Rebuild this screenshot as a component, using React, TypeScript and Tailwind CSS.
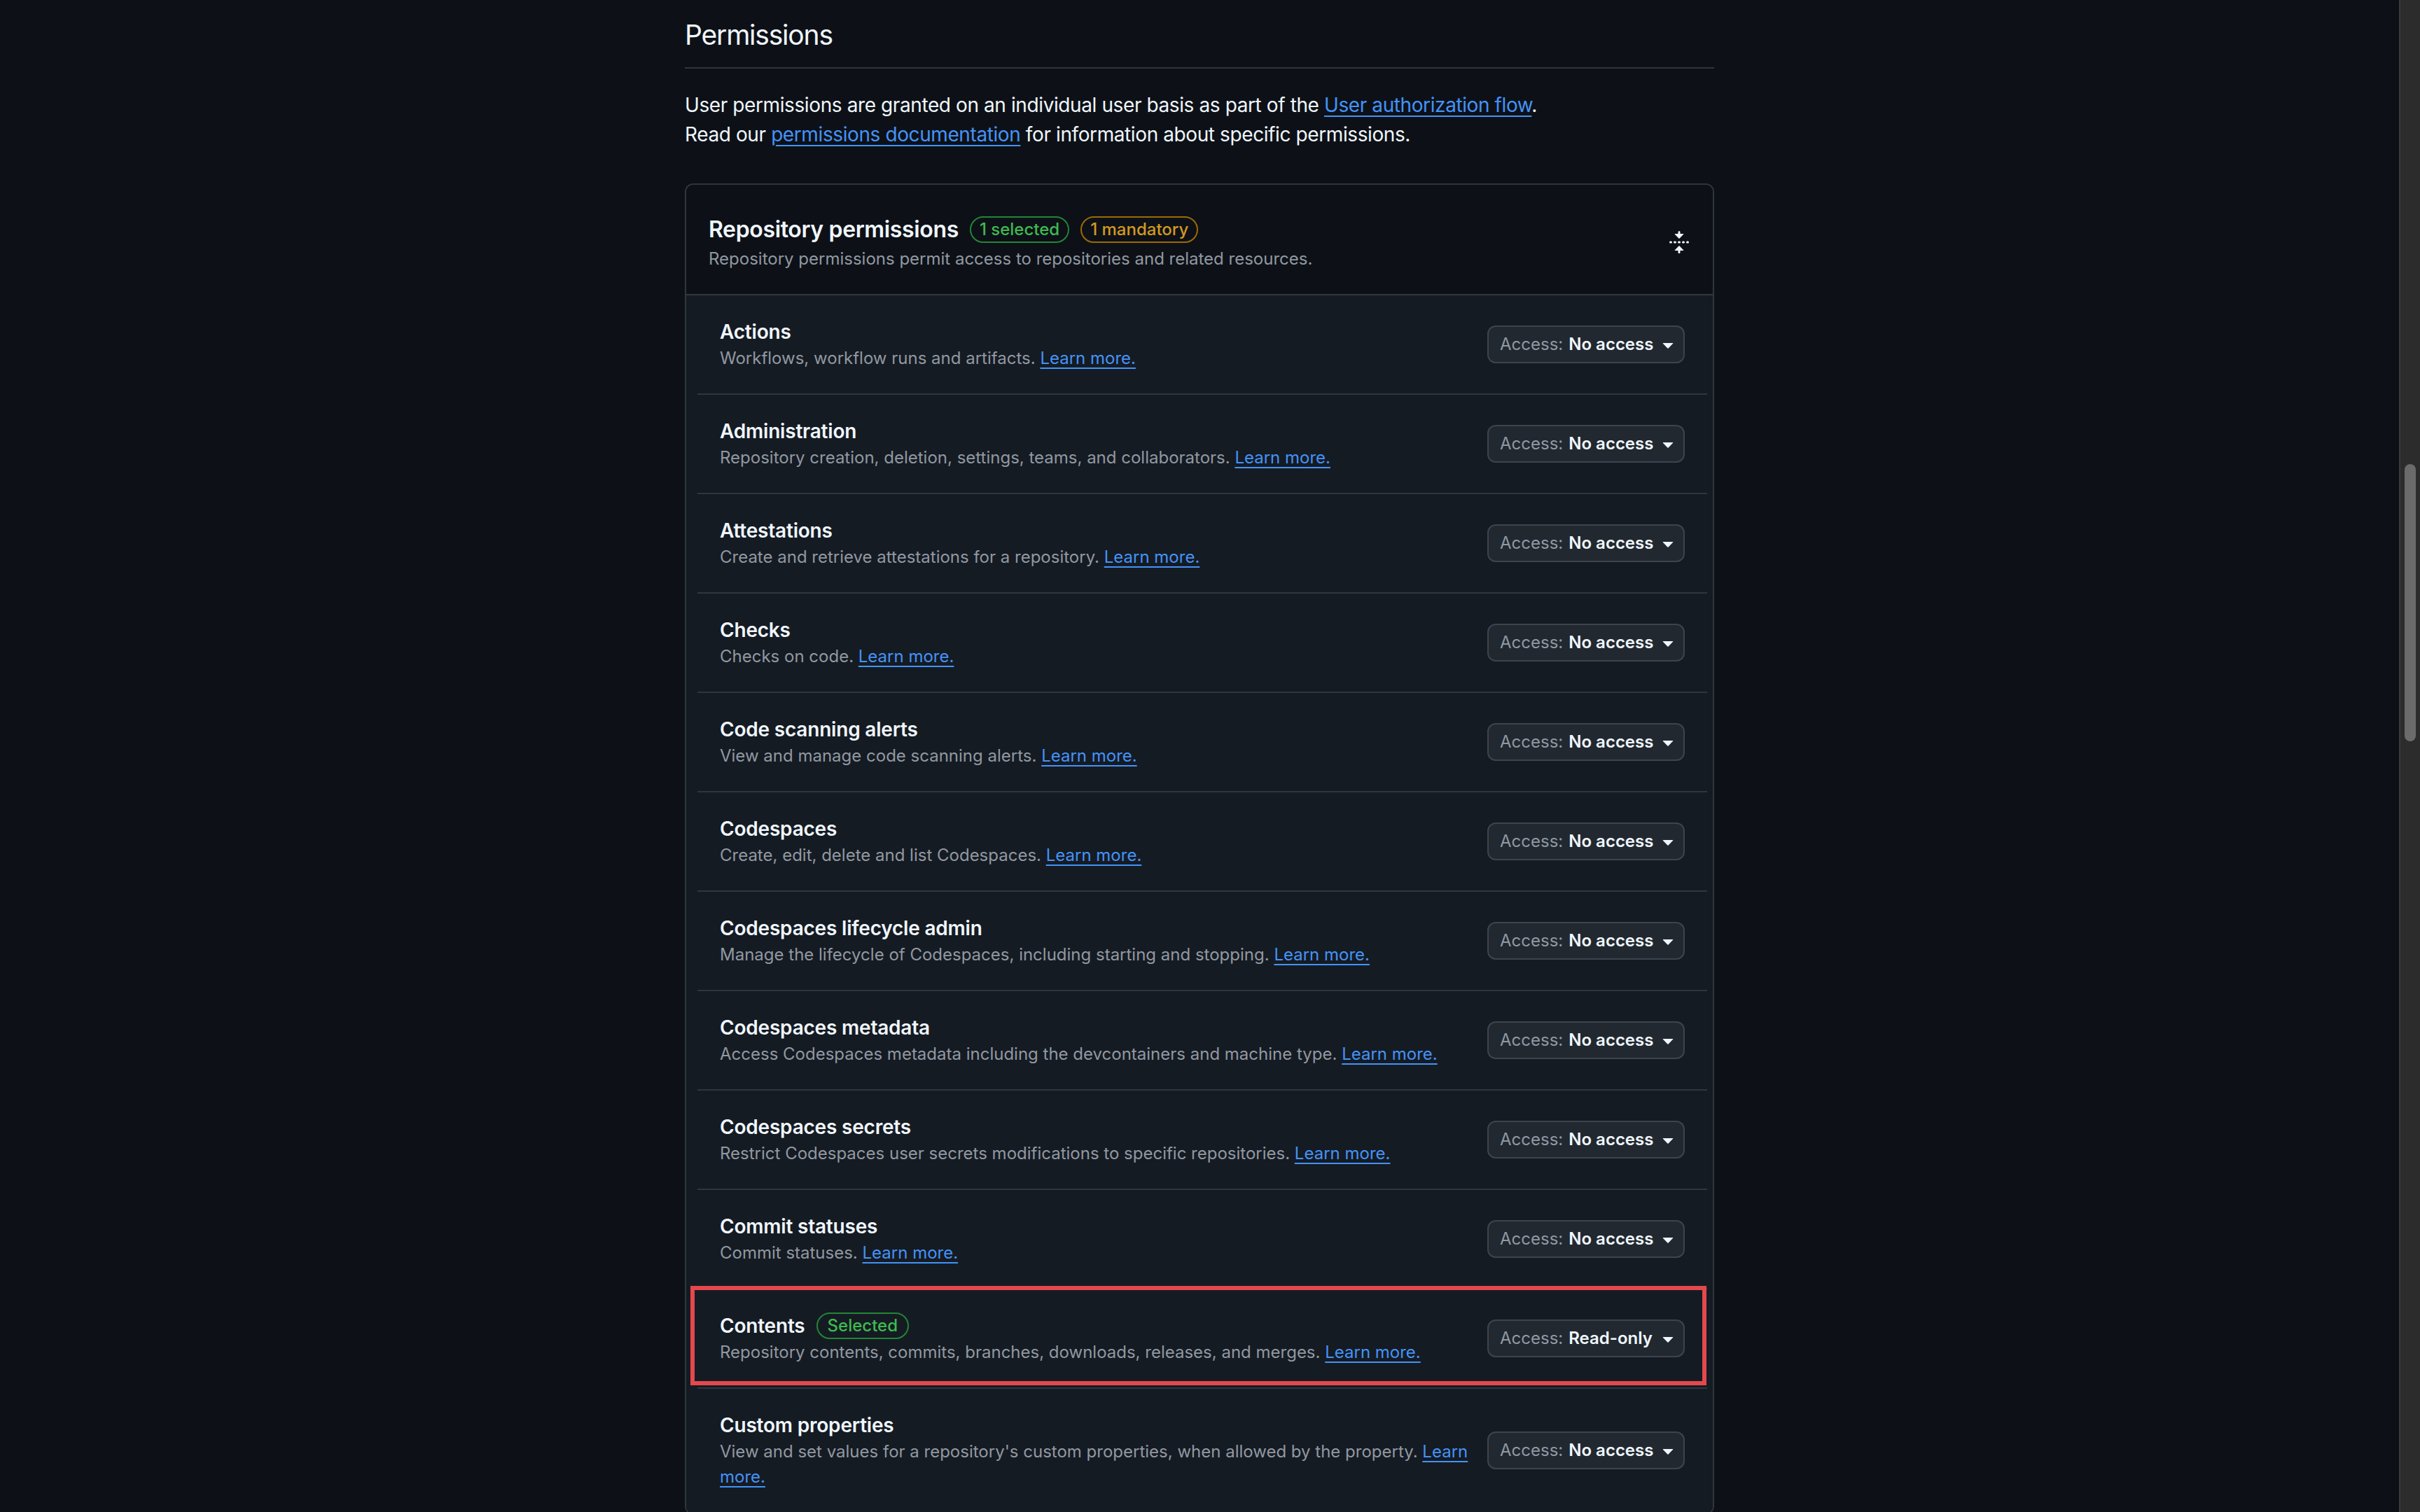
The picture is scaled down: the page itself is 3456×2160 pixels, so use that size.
import React from 'react';

type Perm = {
  title: string;
  desc: string;
  access: string;
  selected?: boolean;
};

const perms: Perm[] = [
  { title: 'Actions', desc: 'Workflows, workflow runs and artifacts.', access: 'No access' },
  { title: 'Administration', desc: 'Repository creation, deletion, settings, teams, and collaborators.', access: 'No access' },
  { title: 'Attestations', desc: 'Create and retrieve attestations for a repository.', access: 'No access' },
  { title: 'Checks', desc: 'Checks on code.', access: 'No access' },
  { title: 'Code scanning alerts', desc: 'View and manage code scanning alerts.', access: 'No access' },
  { title: 'Codespaces', desc: 'Create, edit, delete and list Codespaces.', access: 'No access' },
  { title: 'Codespaces lifecycle admin', desc: 'Manage the lifecycle of Codespaces, including starting and stopping.', access: 'No access' },
  { title: 'Codespaces metadata', desc: 'Access Codespaces metadata including the devcontainers and machine type.', access: 'No access' },
  { title: 'Codespaces secrets', desc: 'Restrict Codespaces user secrets modifications to specific repositories.', access: 'No access' },
  { title: 'Commit statuses', desc: 'Commit statuses.', access: 'No access' },
  { title: 'Contents', desc: 'Repository contents, commits, branches, downloads, releases, and merges.', access: 'Read-only', selected: true },
  { title: 'Custom properties', desc: "View and set values for a repository's custom properties, when allowed by the property.", access: 'No access' },
];

const FoldIcon = () => (
  <svg viewBox="0 0 16 16" className="h-[32px] w-[32px] fill-[#f0f6fc]" aria-hidden>
    <path d="M10.896 2H8.75V.75a.75.75 0 0 0-1.5 0V2H5.104a.25.25 0 0 0-.177.427l2.896 2.896a.25.25 0 0 0 .354 0l2.896-2.896A.25.25 0 0 0 10.896 2ZM8.75 15.25a.75.75 0 0 1-1.5 0V14H5.104a.25.25 0 0 1-.177-.427l2.896-2.896a.25.25 0 0 1 .354 0l2.896 2.896a.25.25 0 0 1-.177.427H8.75v1.25Zm-6.5-6.5a.75.75 0 0 0 0-1.5h-.5a.75.75 0 0 0 0 1.5h.5ZM6 8a.75.75 0 0 1-.75.75h-.5a.75.75 0 0 1 0-1.5h.5A.75.75 0 0 1 6 8Zm2.25.75a.75.75 0 0 0 0-1.5h-.5a.75.75 0 0 0 0 1.5h.5ZM12 8a.75.75 0 0 1-.75.75h-.5a.75.75 0 0 1 0-1.5h.5A.75.75 0 0 1 12 8Zm2.25.75a.75.75 0 0 0 0-1.5h-.5a.75.75 0 0 0 0 1.5h.5Z" />
  </svg>
);

const Caret = () => (
  <svg viewBox="0 0 16 16" className="h-[32px] w-[32px] shrink-0 fill-[#f0f6fc]" aria-hidden>
    <path d="m4.427 7.427 3.396 3.396a.25.25 0 0 0 .354 0l3.396-3.396A.25.25 0 0 0 11.396 7H4.604a.25.25 0 0 0-.177.427Z" />
  </svg>
);

const linkCls = 'cursor-pointer text-[#4493f8] underline decoration-[2px] underline-offset-[5px]';

const PermRow = ({ p }: { p: Perm }) => (
  <div className="relative flex items-center gap-[24px] border-b-2 border-[#30363d] px-[32px] py-[32px]">
    <div className="min-w-0 flex-1">
      <div className="flex items-center gap-[16px]">
        <span className="text-[28px] font-semibold leading-[40px] tracking-[-0.2px] text-[#f0f6fc]">{p.title}</span>
        {p.selected && (
          <span className="rounded-full border-2 border-[#238636] px-[14px] text-[24px] font-medium leading-[34px] text-[#3fb950]">
            Selected
          </span>
        )}
      </div>
      <p className="text-[24px] leading-[36px] text-[#9198a1]">
        {p.desc} <a className={linkCls}>Learn more.</a>
      </p>
    </div>
    <button className="flex h-[54px] w-[282px] shrink-0 items-center rounded-[12px] border-2 border-[#3d444d] bg-[#212830] pl-[16px] pr-[6px] text-[24px]">
      <span className="text-[#9198a1]">Access:</span>
      <span className="ml-[8px] font-semibold text-[#f0f6fc]">{p.access}</span>
      <span className="ml-auto">
        <Caret />
      </span>
    </button>
    {p.selected && (
      <div className="pointer-events-none absolute -left-[10px] -top-[5px] bottom-[3px] right-[1px] border-[6px] border-[#e5484d]" />
    )}
  </div>
);

export default function App() {
  return (
    <div className="flex h-[2160px] w-full overflow-hidden bg-[#0d1117] font-[Inter,'Noto_Sans',sans-serif] text-[#f0f6fc]">
      <main className="min-w-0 flex-1">
        <div className="mx-auto w-[1470px]">
          <h2 className="border-b-2 border-[#30363d] pb-[16px] pt-[20px] text-[39px] font-normal leading-[60px] tracking-[-1.2px]">
            Permissions
          </h2>
          <div className="mt-[31px] text-[28px] leading-[42px] tracking-[-0.4px]">
            <p>
              User permissions are granted on an individual user basis as part of the{' '}
              <a className={linkCls}>User authorization flow</a>.
            </p>
            <p>
              Read our <a className={linkCls}>permissions documentation</a> for information about specific permissions.
            </p>
          </div>

          <section className="mt-[49px] overflow-hidden rounded-[12px] border-2 border-[#30363d]">
            <div className="flex items-center justify-between border-b-2 border-[#30363d] bg-[#0d1117] px-[32px] pb-[32px] pt-[40px]">
              <div>
                <div className="flex items-center gap-[16px]">
                  <h3 className="text-[32px] font-semibold leading-[48px] tracking-[-0.35px]">Repository permissions</h3>
                  <span className="rounded-full border-2 border-[#238636] px-[12px] text-[24px] font-medium leading-[34px] text-[#3fb950]">
                    1 selected
                  </span>
                  <span className="rounded-full border-2 border-[#9e6a03] px-[12px] text-[24px] font-medium leading-[34px] text-[#d29922]">
                    1 mandatory
                  </span>
                </div>
                <p className="text-[24px] leading-[36px] text-[#9198a1]">
                  Repository permissions permit access to repositories and related resources.
                </p>
              </div>
              <FoldIcon />
            </div>
            <div className="bg-[#151b23] pl-[16px] pr-[8px]">
              {perms.map((p) => (
                <PermRow key={p.title} p={p} />
              ))}
            </div>
          </section>
        </div>
      </main>
      <div className="w-[30px] shrink-0 border-l-2 border-[#3a3a3a] bg-[#2c2c2c]">
        <div className="ml-[6px] mt-[663px] h-[396px] w-[16px] rounded-full bg-[#6b6b6b]" />
      </div>
    </div>
  );
}
